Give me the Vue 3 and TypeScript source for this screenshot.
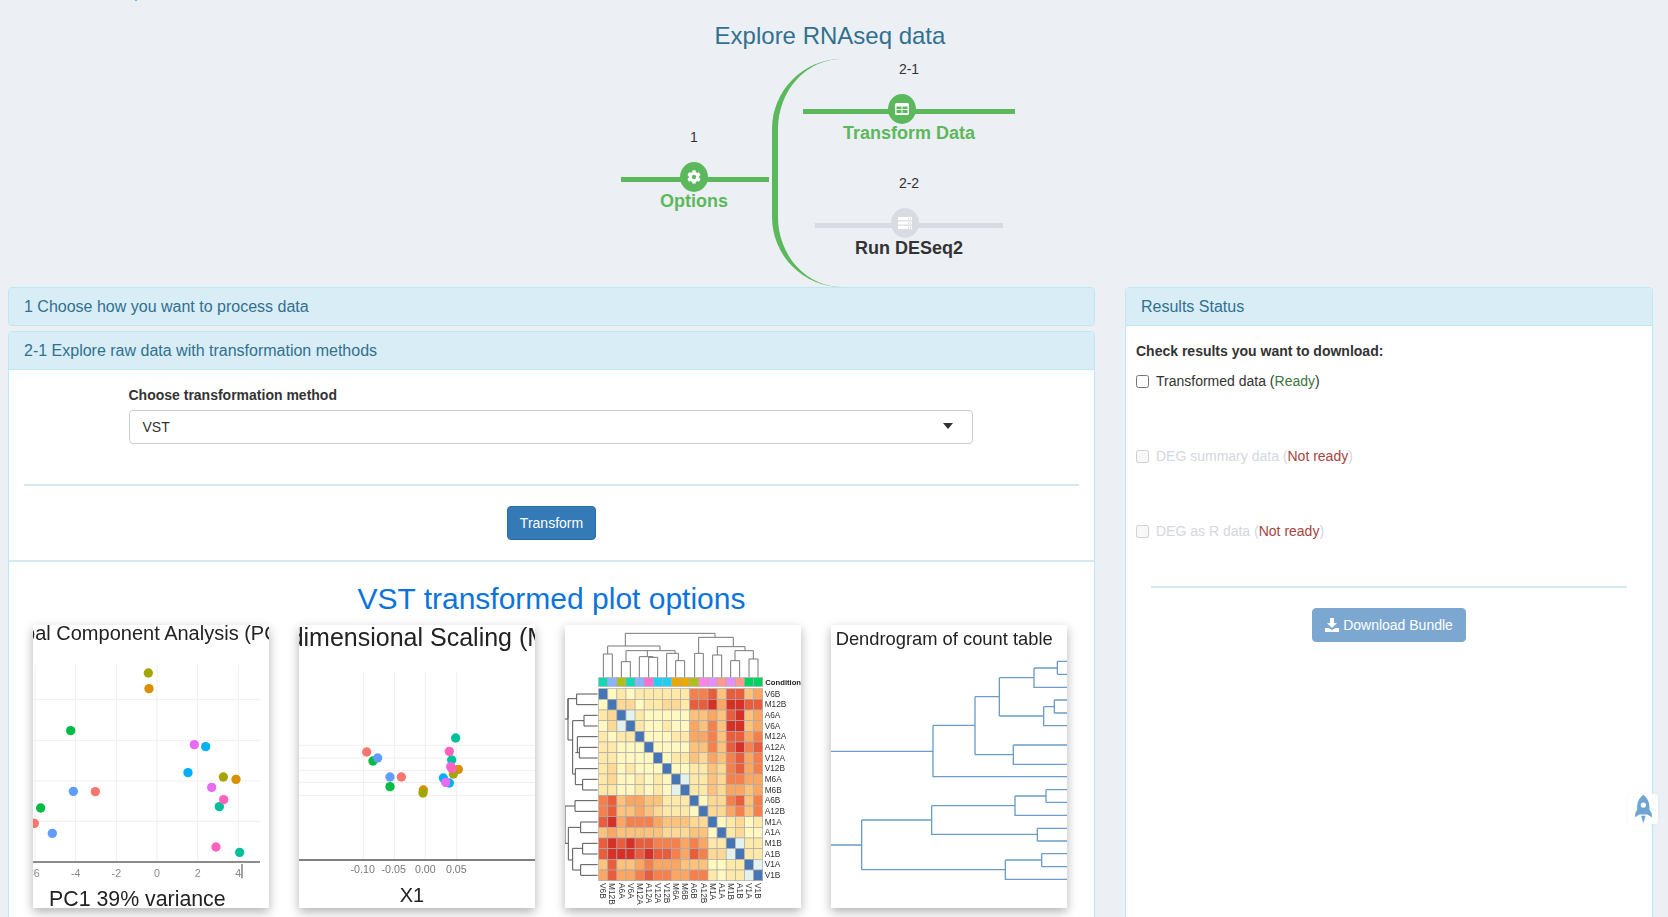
<script setup lang="ts">
import { ref } from 'vue'

// all plot coordinates live in a 708x849 box (3x the drawn size)
interface Dot {
  x: number
  y: number
  c: string
}

const olive = '#a3a500'
const orange = '#d89000'
const green = '#00bb44'
const violet = '#e76bf3'
const cyan = '#00b0f6'
const blue = '#619cff'
const salmon = '#f8766d'
const pink = '#ff62bc'
const teal = '#00bf9a'

const pcaDots: Dot[] = [
  { x: 385, y: 189, c: olive },
  { x: 387, y: 236, c: orange },
  { x: 152, y: 362, c: green },
  { x: 523, y: 404, c: violet },
  { x: 557, y: 410, c: cyan },
  { x: 504, y: 488, c: cyan },
  { x: 610, y: 501, c: olive },
  { x: 648, y: 508, c: orange },
  { x: 575, y: 532, c: violet },
  { x: 160, y: 544, c: blue },
  { x: 226, y: 545, c: salmon },
  { x: 598, y: 590, c: teal },
  { x: 611, y: 569, c: pink },
  { x: 62, y: 594, c: green },
  { x: 43, y: 640, c: salmon },
  { x: 97, y: 670, c: blue },
  { x: 588, y: 711, c: pink },
  { x: 659, y: 727, c: teal },
]

const mdsDots: Dot[] = [
  { x: 497, y: 384, c: teal },
  { x: 230, y: 426, c: salmon },
  { x: 249, y: 453, c: green },
  { x: 263, y: 444, c: blue },
  { x: 485, y: 450, c: teal },
  { x: 505, y: 478, c: orange },
  { x: 490, y: 492, c: olive },
  { x: 478, y: 424, c: pink },
  { x: 482, y: 470, c: violet },
  { x: 486, y: 476, c: pink },
  { x: 300, y: 501, c: blue },
  { x: 334, y: 501, c: salmon },
  { x: 460, y: 504, c: cyan },
  { x: 478, y: 519, c: cyan },
  { x: 467, y: 517, c: violet },
  { x: 300, y: 530, c: green },
  { x: 400, y: 540, c: orange },
  { x: 399, y: 549, c: olive },
]

const pcaTicks = [
  { x: 45, t: '-6' },
  { x: 167, t: '-4' },
  { x: 289, t: '-2' },
  { x: 411, t: '0' },
  { x: 533, t: '2' },
  { x: 655, t: '4' },
]
const mdsTicks = [
  { x: 218, t: '-0.10' },
  { x: 311, t: '-0.05' },
  { x: 406, t: '0.00' },
  { x: 499, t: '0.05' },
]

// heatmap
const samples = ['V6B', 'M12B', 'A6A', 'V6A', 'M12A', 'A12A', 'V12A', 'V12B', 'M6A', 'M6B', 'A6B', 'A12B', 'M1A', 'A1A', 'M1B', 'A1B', 'V1A', 'V1B']
const conditionColors = ['#14d8b5', '#8ab4ff', '#b0bf1a', '#14d8b5', '#8ab4ff', '#ff6fd0', '#1fcdf5', '#1fcdf5', '#eda800', '#eda800', '#b0bf1a', '#ff85e0', '#e68fff', '#ff9a90', '#e68fff', '#ff9a90', '#00d25f', '#00d25f']
const levels = ['#4575b4', '#e4f2ee', '#fff8c0', '#ffe9a8', '#fed996', '#fdc27c', '#fba763', '#f6804c', '#e95c3c', '#d73027']
const matrix = [
  '023233333377858856',
  '204423344388969988',
  '340132222255658956',
  '241032232265759956',
  '323302223366758867',
  '332220222255758978',
  '332222023354657867',
  '342322202233547867',
  '342232320133547766',
  '332232321033546656',
  '785665533302447857',
  '785565433320446757',
  '896777655544023423',
  '565555544455203422',
  '898988777676330133',
  '899989887687441033',
  '585567666555223301',
  '686678776677323310',
]
const cellW = 492 / 18
const cellH = 32
const cells = matrix.flatMap((row, r) =>
  row.split('').map((v, c) => ({
    id: `${r}-${c}`,
    x: 116 + c * cellW,
    y: 206 + r * cellH,
    fill: levels[Number(v)],
  })),
)

const treeTop =
  'M196 78V40H465V52 M143 102V78H300V92 M130 173V102H157V173 M198 125V92H345V100 M184 173V125H211V173 ' +
  'M262 110V92 M238 173V110H280 M266 173V112H293V173 M320 173V100H355V122 M347 173V122H374V173 ' +
  'M416 100V52H520V80 M404 173V100H430V173 M472 105V80H555V92 M458 173V105H485V173 M525 122V92H580V117 ' +
  'M512 173V122H539V173 M567 173V117H594V173'
const treeLeft =
  'M15 297H24V236H50 M50 222V254 M50 222H113 M50 254H113 M24 236V360H38 M72 286V318H113 M72 286H113 ' +
  'M38 302H72 M38 302V462H46 M52 350H113 M52 350V398H58 M58 382V414H113 M58 382H113 M46 398H52 M46 462V446H113 ' +
  'M46 462V494H68 M68 478V510H113 M68 478H113 ' +
  'M15 558H45 M45 542V574H113 M45 542H113 M15 558V670 M25 622H62 M62 606V638H113 M62 606H113 ' +
  'M15 670H25 M25 622V720 M25 720H38 M38 685H68 M68 670V702H113 M68 670H113 M38 685V750H62 M62 734V766H113 M62 734H113'

const dendroPaths =
  'M18 394H324 M324 316V470H730 M324 316H450 M450 230V404 M450 230H523 M450 404H565 M523 173V288 M523 173H627 M523 288H656 ' +
  'M627 144V202H730 M627 144H697 M697 124V163 M697 124H730 M697 163H730 M656 260V317H730 M656 260H688 M688 240V279 M688 240H730 M688 279H730 ' +
  'M565 375V433H730 M565 375H730 ' +
  'M18 675H110 M110 600V749 M110 600H320 M110 749H541 M320 557V643H637 M320 557H570 M570 528V586H730 M570 528H663 M663 509V547 M663 509H730 M663 547H730 ' +
  'M637 625V663 M637 625H730 M637 663H730 M541 720V778H730 M541 720H650 M650 701V740 M650 701H730 M650 740H730'

// download options on the right
const transformedChecked = ref(false)
</script>

<template>
  <div class="page">
    <span class="stray-mark"></span>
    <h2 class="page-title">Explore RNAseq data</h2>

    <!-- workflow -->
    <div class="workflow">
      <div class="step step-first">
        <div class="step-no">1</div>
        <div class="track">
          <span class="line"></span>
          <span class="node">
            <svg width="14" height="14" viewBox="0 0 512 512">
              <path fill="#fff" d="M487.4 315.7l-42.6-24.6c4.3-23.2 4.3-47 0-70.2l42.6-24.6c4.9-2.8 7.1-8.6 5.5-14-11.1-35.6-30-67.8-54.7-94.6-3.8-4.1-10-5.1-14.8-2.3L380.8 110c-17.9-15.4-38.5-27.3-60.8-35.1V25.8c0-5.6-3.9-10.5-9.4-11.7-36.7-8.2-74.3-7.8-109.2 0-5.5 1.2-9.4 6.1-9.4 11.7V75c-22.2 7.9-42.8 19.8-60.8 35.1L88.7 85.5c-4.9-2.8-11-1.9-14.8 2.3-24.7 26.7-43.6 58.9-54.7 94.6-1.7 5.4.6 11.2 5.5 14L67.3 221c-4.3 23.2-4.3 47 0 70.2l-42.6 24.6c-4.9 2.8-7.1 8.6-5.5 14 11.1 35.6 30 67.8 54.7 94.6 3.8 4.1 10 5.1 14.8 2.3l42.6-24.6c17.9 15.4 38.5 27.3 60.8 35.1v49.2c0 5.6 3.9 10.5 9.4 11.7 36.7 8.2 74.3 7.8 109.2 0 5.5-1.2 9.4-6.1 9.4-11.7v-49.2c22.2-7.9 42.8-19.8 60.8-35.1l42.6 24.6c4.9 2.8 11 1.9 14.8-2.3 24.7-26.7 43.6-58.9 54.7-94.6 1.5-5.5-.7-11.3-5.6-14.1zM256 336c-44.1 0-80-35.9-80-80s35.9-80 80-80 80 35.9 80 80-35.9 80-80 80z" />
            </svg>
          </span>
        </div>
        <div class="step-label">Options</div>
      </div>

      <div class="branches">
        <span class="curve"></span>
        <div class="step step-wide">
          <div class="step-no">2-1</div>
          <div class="track">
            <span class="line"></span>
            <span class="node">
              <svg width="14" height="12" viewBox="0 0 14 12">
                <path fill="#fff" fill-rule="evenodd" d="M1.5 0h11A1.5 1.5 0 0 1 14 1.5v9a1.5 1.5 0 0 1-1.5 1.5h-11A1.5 1.5 0 0 1 0 10.5v-9A1.5 1.5 0 0 1 1.5 0zM1.5 3.5v2.5h5v-2.5zM7.5 3.5v2.5h5v-2.5zM1.5 7v3h5v-3zM7.5 7v3h5v-3z" />
              </svg>
            </span>
          </div>
          <div class="step-label">Transform Data</div>
        </div>

        <div class="step step-off">
          <div class="step-no">2-2</div>
          <div class="track">
            <span class="line"></span>
            <span class="node">
              <svg width="14" height="12" viewBox="0 0 14 12">
                <rect y="0" width="14" height="3.2" rx="0.5" fill="#fff" />
                <rect y="4.4" width="14" height="3.2" rx="0.5" fill="#fff" />
                <rect y="8.8" width="14" height="3.2" rx="0.5" fill="#fff" />
                <path fill="#c4c8d0" d="M10 1.2h1v1h-1zM12 1.2h1v1h-1zM10 5.6h1v1h-1zM12 5.6h1v1h-1zM10 10h1v1h-1zM12 10h1v1h-1z" />
              </svg>
            </span>
          </div>
          <div class="step-label">Run DESeq2</div>
        </div>
      </div>
    </div>

    <div class="columns">
      <!-- left column -->
      <div class="col-left">
        <div class="panel">
          <div class="panel-heading">1 Choose how you want to process data</div>
        </div>

        <div class="panel panel-open">
          <div class="panel-heading">2-1 Explore raw data with transformation methods</div>
          <div class="transform-form">
            <div class="field">
              <label class="field-label">Choose transformation method</label>
              <div class="fake-select">
                <span>VST</span>
                <span class="caret"></span>
              </div>
            </div>
            <hr class="rule" />
            <button class="btn btn-primary" type="button">Transform</button>
          </div>

          <div class="plots-section">
            <h2 class="plots-title">VST transformed plot options</h2>
            <div class="plots-grid">
              <!-- PCA -->
              <div class="plot">
                <svg viewBox="39 45 708 849" width="236" height="283">
                  <rect x="39" y="45" width="708" height="849" fill="#fff" />
                  <text x="349" y="89" font-size="60" text-anchor="middle" fill="#222">Principal Component Analysis (PCA)</text>
                  <g stroke="#efefef" stroke-width="3">
                    <path v-for="t in pcaTicks" :key="t.t" :d="`M${t.x} 163V755`" />
                    <path d="M39 269H720M39 391H720M39 513H720M39 634H720" />
                  </g>
                  <circle v-for="d in pcaDots" :key="`${d.x}-${d.y}`" :cx="d.x" :cy="d.y" r="14" :fill="d.c" />
                  <path d="M39 756H720" stroke="#666" stroke-width="4" />
                  <text v-for="t in pcaTicks" :key="t.t" :x="t.x" y="800" font-size="32" text-anchor="middle" fill="#888">{{ t.t }}</text>
                  <path d="M666 762V805" stroke="#444" stroke-width="3" />
                  <text x="87" y="888" font-size="64" fill="#222">PC1 39% variance</text>
                </svg>
              </div>

              <!-- MDS -->
              <div class="plot">
                <svg viewBox="27 45 708 849" width="236" height="283">
                  <rect x="27" y="45" width="708" height="849" fill="#fff" />
                  <text x="372" y="107" font-size="75" text-anchor="middle" fill="#222">Multidimensional Scaling (MDS)</text>
                  <g stroke="#efefef" stroke-width="3">
                    <path d="M220 185V750M313 185V750M406 185V750M500 185V750" />
                    <path d="M27 406H735M27 444H735M27 481H735M27 517H735M27 556H735" />
                  </g>
                  <circle v-for="d in mdsDots" :key="`${d.x}-${d.y}`" :cx="d.x" :cy="d.y" r="14" :fill="d.c" />
                  <path d="M27 750H735" stroke="#555" stroke-width="4" />
                  <text v-for="t in mdsTicks" :key="t.t" :x="t.x" y="790" font-size="32" text-anchor="middle" fill="#777">{{ t.t }}</text>
                  <text x="366" y="875" font-size="60" text-anchor="middle" fill="#222">X1</text>
                </svg>
              </div>

              <!-- heatmap -->
              <div class="plot">
                <svg viewBox="15 15 708 849" width="236" height="283">
                  <rect x="15" y="15" width="708" height="849" fill="#fff" />
                  <path :d="treeTop" fill="none" stroke="#777" stroke-width="3" />
                  <path :d="treeLeft" fill="none" stroke="#555" stroke-width="3" />
                  <rect
                    v-for="(c, i) in conditionColors"
                    :key="i"
                    :x="116 + i * cellW"
                    y="173"
                    :width="cellW"
                    height="26"
                    :fill="c"
                    stroke="#aaa"
                    stroke-width="2"
                  />
                  <text x="616" y="195" font-size="23" font-weight="700" fill="#222">Condition</text>
                  <rect
                    v-for="c in cells"
                    :key="c.id"
                    :x="c.x"
                    :y="c.y"
                    :width="cellW"
                    :height="cellH"
                    :fill="c.fill"
                    stroke="#aaa"
                    stroke-width="2"
                  />
                  <text
                    v-for="(s, i) in samples"
                    :key="s"
                    x="614"
                    :y="230 + i * cellH"
                    font-size="25"
                    fill="#333"
                  >{{ s }}</text>
                  <text
                    v-for="(s, i) in samples"
                    :key="`col-${s}`"
                    font-size="25"
                    fill="#333"
                    :transform="`translate(${121 + i * cellW} 789) rotate(90)`"
                  >{{ s }}</text>
                </svg>
              </div>

              <!-- dendrogram -->
              <div class="plot">
                <svg viewBox="18 15 708 849" width="236" height="283">
                  <rect x="18" y="15" width="708" height="849" fill="#fff" />
                  <text x="32" y="75" font-size="55" fill="#222">Dendrogram of count table</text>
                  <path :d="dendroPaths" fill="none" stroke="#6b9dc8" stroke-width="4" />
                </svg>
              </div>
            </div>
          </div>
        </div>
      </div>

      <!-- right column -->
      <div class="col-right">
        <div class="panel panel-status">
          <div class="panel-heading">Results Status</div>
          <div class="status-body">
            <div class="status-title">Check results you want to download:</div>
            <label class="check-row">
              <input v-model="transformedChecked" type="checkbox" />
              <span>Transformed data (<span class="ok">Ready</span>)</span>
            </label>
            <label class="check-row check-off">
              <input type="checkbox" disabled />
              <span>DEG summary data (<span class="bad">Not ready</span>)</span>
            </label>
            <label class="check-row check-off">
              <input type="checkbox" disabled />
              <span>DEG as R data (<span class="bad">Not ready</span>)</span>
            </label>
            <hr class="rule status-rule" />
            <button class="btn btn-download" type="button">
              <svg width="14" height="14" viewBox="0 0 14 14">
                <path fill="#fff" d="M5 0h4v5h3L7 10 2 5h3zM0 10h3.5L7 12l3.5-2H14v4H0z" />
              </svg>
              Download Bundle
            </button>
          </div>
        </div>
      </div>
    </div>

    <!-- floating rocket -->
    <div class="rocket">
      <svg width="19" height="30" viewBox="100 70 55 92">
        <path fill="#6fa5d3" d="M127 72C140 82 146 95 146 112V118L153 130V142L140 133H114L102 142V130L108 118V112C108 95 114 82 127 72Z" />
        <circle cx="127" cy="104" r="8" fill="#fff" />
        <path fill="#6fa5d3" d="M120 137H134L127 160Z" />
      </svg>
    </div>
  </div>
</template>

<style>
html,
body {
  margin: 0;
  overflow: hidden;
}
</style>

<style scoped>
.page {
  position: relative;
  height: 100vh;
  overflow: hidden;
  background: #ecf0f5;
  font-family: 'Liberation Sans', Arial, sans-serif;
  font-size: 14px;
  color: #333;
  box-sizing: border-box;
}
.stray-mark {
  position: absolute;
  left: 135px;
  top: 0;
  width: 2px;
  height: 1px;
  background: #6fb3d8;
}
.page-title {
  margin: 0;
  height: 59px;
  padding: 22px 8px 0 0;
  box-sizing: border-box;
  line-height: 28px;
  font-size: 24px;
  font-weight: 400;
  text-align: center;
  color: #31708f;
}

/* workflow */
.workflow {
  display: flex;
  justify-content: center;
  height: 228px;
  padding-right: 32px;
}
.step {
  display: flex;
  flex-direction: column;
  align-items: stretch;
  text-align: center;
  color: #5cb85c;
}
.step-first {
  width: 148px;
  margin: 68px 3px 0 0;
}
.step-first .step-no,
.step-first .step-label {
  padding-right: 2px;
}
.step-wide {
  width: 212px;
}
.step-off {
  width: 188px;
  margin-top: 30px;
  color: #333;
}
.step-no {
  height: 20px;
  line-height: 20px;
  margin-bottom: 15px;
  color: #333;
}
.track {
  position: relative;
  height: 30px;
  display: flex;
  justify-content: center;
}
.line {
  position: absolute;
  left: 0;
  right: 0;
  top: 15px;
  height: 5px;
  background: #5cb85c;
}
.node {
  position: relative;
  width: 28px;
  height: 30px;
  border-radius: 50%;
  background: #5cb85c;
  display: flex;
  align-items: center;
  justify-content: center;
}
.step-first .node {
  left: -1px;
}
.step-wide .node {
  left: -7px;
}
.step-off .node {
  left: -4px;
}
.step-off .line,
.step-off .node {
  background: #d8dce2;
}
.step-label {
  margin-top: -1px;
  line-height: 20px;
  font-size: 18px;
  font-weight: 700;
}
.step-off .step-label {
  margin-top: 0;
}
.branches {
  position: relative;
  width: 243px;
  box-sizing: border-box;
  padding-left: 31px;
  display: flex;
  flex-direction: column;
  align-items: center;
}
.curve {
  position: absolute;
  left: 0;
  top: 0;
  bottom: 0;
  width: 70px;
  box-sizing: border-box;
  border-left: 6px solid #5cb85c;
  border-radius: 70px 0 0 70px;
}

/* panels */
.columns {
  display: flex;
  gap: 30px;
  padding-left: 8px;
  align-items: flex-start;
}
.col-left {
  width: 1087px;
  flex: none;
  display: flex;
  flex-direction: column;
  gap: 5.5px;
}
.col-right {
  width: 528px;
  flex: none;
}
.panel {
  border: 1px solid #bce8f1;
  border-radius: 4px;
  background: #fff;
  overflow: hidden;
}
.panel-heading {
  padding: 9.5px 15px;
  background: #d9edf7;
  color: #31708f;
  font-size: 16px;
  line-height: 17.6px;
}
.panel-open .panel-heading,
.panel-status .panel-heading {
  border-bottom: 1px solid #bce8f1;
}
.transform-form {
  padding: 15px 15px 20px;
  display: flex;
  flex-direction: column;
  align-items: center;
  border-bottom: 2px solid #d6e9f2;
}
.field {
  width: 845px;
  padding-right: 1px;
  margin-right: 1px;
  box-sizing: border-box;
}
.field-label {
  display: block;
  line-height: 20px;
  margin-bottom: 5px;
  font-weight: 700;
}
.fake-select {
  height: 34px;
  box-sizing: border-box;
  padding: 0 19px 0 13px;
  border: 1px solid #ccc;
  border-radius: 4px;
  display: flex;
  align-items: center;
  justify-content: space-between;
  color: #333;
}
.caret {
  width: 0;
  height: 0;
  margin-top: -2px;
  border-left: 5px solid transparent;
  border-right: 5px solid transparent;
  border-top: 6px solid #333;
}
.rule {
  width: 100%;
  height: 2px;
  margin: 40px 0 20px;
  border: 0;
  background: #d6e9f2;
}
.btn {
  height: 34px;
  box-sizing: border-box;
  padding: 0 12px;
  border-radius: 4px;
  font-family: inherit;
  font-size: 14px;
  color: #fff;
  cursor: pointer;
}
.btn-primary {
  background: #337ab7;
  border: 1px solid #2e6da4;
}
.btn-download {
  display: inline-flex;
  align-items: center;
  gap: 4px;
  align-self: center;
  background: #7ba7d0;
  border: 1px solid #7ba7d0;
}

/* plots */
.plots-section {
  padding: 19px 24px 20px;
}
.plots-title {
  margin: 0 0 8px;
  line-height: 36px;
  font-size: 30px;
  font-weight: 400;
  text-align: center;
  color: #0b74dc;
}
.plots-grid {
  display: grid;
  grid-template-columns: repeat(4, 236px);
  gap: 30px;
}
.plot {
  height: 283px;
  background: #fff;
  box-shadow: 0 4px 10px rgba(0, 0, 0, 0.3);
}
.plot svg {
  display: block;
  filter: blur(0.5px);
  font-family: 'Liberation Sans', Arial, sans-serif;
}

/* status */
.panel-status {
  min-height: 700px;
}
.status-body {
  padding: 15px 10px;
  display: flex;
  flex-direction: column;
  align-items: flex-start;
}
.status-title {
  line-height: 20px;
  font-weight: 700;
  margin-bottom: 10px;
}
.check-row {
  display: flex;
  align-items: center;
  gap: 7px;
  height: 20px;
  margin-bottom: 55px;
}
.check-row input {
  width: 13px;
  height: 13px;
  margin: 2px 0 0;
}
.check-off {
  color: #d3d7e0;
}
.check-off:last-of-type {
  margin-bottom: 45px;
}
.ok {
  color: #3c763d;
}
.bad {
  color: #a94442;
}
.status-rule {
  width: 476px;
  margin: 0 auto 20px;
}

/* rocket */
.rocket {
  position: absolute;
  left: 1628px;
  top: 794px;
  width: 30px;
  height: 30px;
  border-radius: 3px;
  background: rgba(255, 255, 255, 0.92);
  box-shadow: 0 0 4px rgba(0, 0, 0, 0.04);
  display: flex;
  align-items: center;
  justify-content: center;
}
</style>
